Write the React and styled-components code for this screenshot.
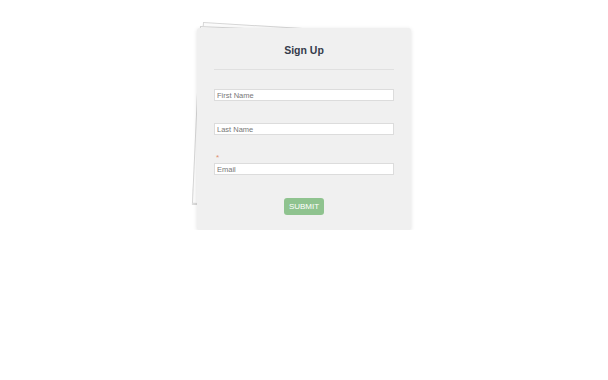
import React from 'react';
import styled, { createGlobalStyle } from 'styled-components';

const GlobalStyle = createGlobalStyle`
  body {
    margin: 0;
    background: #ffffff;
    font-family: "Liberation Sans", Arial, sans-serif;
  }
`;

const Page = styled.div`
  display: flex;
  justify-content: center;
  padding-top: 28px;
`;

const Stack = styled.div`
  position: relative;
  width: 214px;
`;

const Sheet = styled.div`
  position: absolute;
  left: ${(props) => props.left}px;
  top: ${(props) => props.top}px;
  width: 200px;
  height: ${(props) => props.h}px;
  background: #fbfbfb;
  border: 1px solid #d6d6d6;
  transform-origin: top left;
  transform: rotate(${(props) => props.deg}deg);
  z-index: 0;
`;

const Card = styled.form`
  position: relative;
  z-index: 1;
  box-sizing: border-box;
  width: 214px;
  padding: 16px 17px 15px;
  background: #f0f0f0;
  border-radius: 3px;
  box-shadow: 0 1px 4px rgba(0, 0, 0, 0.12);
  display: flex;
  flex-direction: column;
`;

const Title = styled.h2`
  margin: 0;
  font-size: 10.5px;
  line-height: 13px;
  font-weight: bold;
  text-align: center;
  color: #353b4b;
`;

const Rule = styled.div`
  margin-top: 12px;
  height: 1px;
  background: #e0e0e0;
`;

const Field = styled.div`
  display: flex;
  flex-direction: column;
  margin-top: ${(props) => props.gap}px;
`;

const Required = styled.span`
  font-size: 8px;
  line-height: 10px;
  height: 10px;
  padding-left: 2px;
  color: #e0906e;
`;

const Input = styled.input`
  box-sizing: border-box;
  width: 180px;
  height: 12px;
  margin: 0;
  padding: 0 2px;
  border: 1px solid #dcdcdc;
  background: #ffffff;
  font-family: "Liberation Sans", Arial, sans-serif;
  font-size: 7.5px;
  color: #666666;
  outline: none;
  &::placeholder {
    color: #777777;
    opacity: 1;
  }
`;

const Submit = styled.button`
  align-self: center;
  margin-top: 23px;
  width: 40px;
  height: 17px;
  padding: 0;
  border: none;
  border-radius: 3px;
  background: #8fc38f;
  color: #ffffff;
  font-family: "Liberation Sans", Arial, sans-serif;
  font-size: 8px;
  cursor: pointer;
`;

export default function App() {
  return (
    <>
      <GlobalStyle />
      <Page>
        <Stack>
          <Sheet left={6} top={-6} h={181} deg={3.5} />
          <Sheet left={3} top={-2} h={176} deg={2.6} />
          <Card onSubmit={(e) => e.preventDefault()}>
            <Title>Sign Up</Title>
            <Rule />
            <Field gap={19}>
              <Input placeholder="First Name" />
            </Field>
            <Field gap={22}>
              <Input placeholder="Last Name" />
            </Field>
            <Field gap={18}>
              <Required>*</Required>
              <Input placeholder="Email" />
            </Field>
            <Submit type="submit">SUBMIT</Submit>
          </Card>
        </Stack>
      </Page>
    </>
  );
}
